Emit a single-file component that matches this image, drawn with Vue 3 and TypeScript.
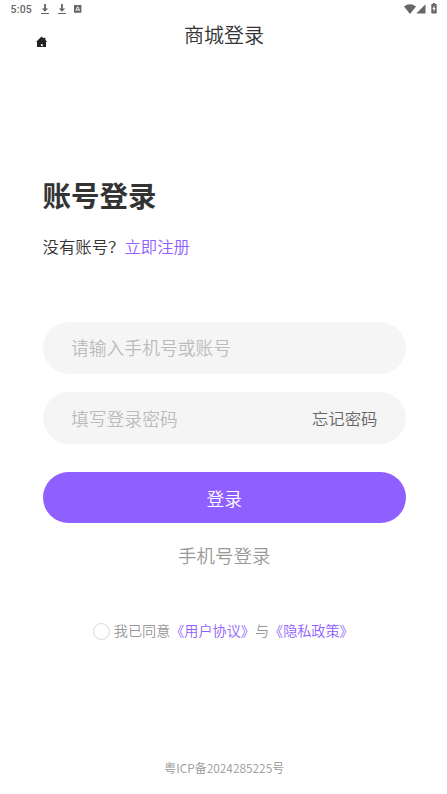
<script setup lang="ts">
import { ref } from 'vue'

const account = ref('')
const password = ref('')
const agreed = ref(false)
</script>

<template>
  <main class="page">
    <div class="status">
      <span class="time">5:05</span>
      <svg v-for="n in 2" :key="n" class="download" viewBox="0 0 10 12" aria-hidden="true">
        <path d="M4.1 1h1.8v4.5h2.3L5 8.8 1.8 5.5h2.3zM1 10h8v1H1z" />
      </svg>
      <svg class="app" viewBox="0 0 8 8" aria-hidden="true">
        <rect width="7.4" height="7.8" rx="0.6" />
        <path class="mark" d="M1.9 6 3.4 1.9h.7L5.6 6M2.6 4.8H5" />
      </svg>
      <span class="spacer"></span>
      <svg class="wifi" viewBox="0 0 12 10" aria-hidden="true">
        <path d="M0 2.5Q6-2.1 12 2.5L6 10z" />
      </svg>
      <svg class="signal" viewBox="0 0 10 10" aria-hidden="true"><path d="M9.5.3v9.2H.3z" /></svg>
      <svg class="battery" viewBox="0 0 6 11" aria-hidden="true">
        <path d="M1.8 0h2.4v1H5q.7 0 .7.7v8q0 .7-.7.7H1q-.7 0-.7-.7v-8Q.3 1 1 1h.8z" />
        <path class="bolt" d="M3.4 2.5 1.4 6h1.2v2.8l2-3.6H3.4z" />
      </svg>
    </div>

    <header class="nav">
      <button class="home" aria-label="首页">
        <svg viewBox="0 0 12 12">
          <path d="M5.5.5 7.8 2.6V1.8h1.6v2.3L11.3 6H10v5H6.6V8H5v3H1V6H0z" />
          <path d="M5 10h1.6v1H5z" />
        </svg>
      </button>
      <span class="nav-title">商城登录</span>
    </header>

    <h1>账号登录</h1>
    <p class="register">没有账号？<a>立即注册</a></p>

    <form @submit.prevent>
      <label class="field"><input v-model="account" type="text" placeholder="请输入手机号或账号" /></label>
      <div class="field">
        <input v-model="password" class="password" type="password" placeholder="填写登录密码" />
        <a class="forgot">忘记密码</a>
      </div>
      <button class="submit" type="submit">登录</button>
    </form>
    <a class="phone">手机号登录</a>

    <div class="agreement">
      <button class="radio" :class="{ on: agreed }" aria-label="同意" @click="agreed = !agreed"></button>
      <span>我已同意<a>《用户协议》</a>与<a>《隐私政策》</a></span>
    </div>

    <footer>粤ICP备2024285225号</footer>
  </main>
</template>

<style>
body {
  background: #fff;
}
</style>

<style scoped>
.page {
  box-sizing: border-box;
  display: flex;
  flex-direction: column;
  height: 794px;
  padding: 0 41px 0 42.5px;
  overflow: hidden;
  color: #333;
  font-family: "Noto Sans CJK SC", sans-serif;
  font-weight: 350;
}
button,
input {
  margin: 0;
  padding: 0;
  border: 0;
  outline: 0;
  background: none;
  font-family: inherit;
  font-weight: inherit;
}
svg {
  display: block;
}
.status {
  display: flex;
  align-items: center;
  flex: none;
  height: 18px;
  margin: 0 -31px 0 -32px;
  color: #666;
  fill: #666;
}
.time {
  width: 29.5px;
  padding-top: 1px;
  font: 500 10.5px/18px Roboto, sans-serif;
  letter-spacing: 0.2px;
}
.download {
  width: 10px;
  height: 12px;
  margin-right: 6.5px;
}
.app {
  width: 8px;
  height: 8px;
  margin-left: 0.5px;
}
.mark {
  fill: none;
  stroke: #fff;
  stroke-width: 0.9;
}
.spacer {
  flex: 1;
}
.wifi {
  width: 12px;
  height: 10px;
}
.signal {
  width: 10px;
  height: 10px;
}
.battery {
  width: 6px;
  height: 11px;
  margin: 0 0.5px 1px 5px;
}
.bolt {
  fill: #fff;
}
.nav {
  display: grid;
  grid-template-columns: 12px 1fr 12px;
  flex: none;
  height: 34px;
  margin: 0 -6px 0 -6.5px;
}
.home {
  width: 12px;
  height: 12px;
  margin-top: 18px;
}
.home svg {
  width: 12px;
  height: 12px;
  fill: #222;
}
.nav-title {
  font-size: 20px;
  line-height: 34px;
  text-align: center;
}
h1 {
  flex: none;
  margin: 122px 0 0;
  font-size: 28.5px;
  font-weight: 700;
  line-height: 42px;
}
.register {
  flex: none;
  margin: 18px 0 0;
  font-size: 16.4px;
  line-height: 24px;
}
a {
  color: #8f5fff;
}
form {
  display: flex;
  flex-direction: column;
  flex: none;
  margin-top: 63.5px;
}
.field {
  box-sizing: border-box;
  display: flex;
  align-items: center;
  height: 52.3px;
  margin-bottom: 18px;
  padding: 0 28.5px;
  border-radius: 27px;
  background: #f5f5f5;
}
.field input {
  flex: 1;
  min-width: 0;
  height: 30px;
  margin-bottom: 1px;
  color: #333;
  font-size: 17.8px;
}
.field .password {
  margin-bottom: 0;
}
.field input::placeholder {
  color: #bbb;
  opacity: 1;
}
.forgot {
  color: #666;
  font-size: 16.4px;
}
.submit {
  height: 50.5px;
  margin-top: 10.4px;
  padding-top: 1px;
  border-radius: 26px;
  background: #8f5fff;
  color: #fff;
  font-size: 17.8px;
}
.phone {
  margin-top: 17.6px;
  color: #999;
  font-size: 18.5px;
  line-height: 28px;
  text-align: center;
}
.agreement {
  display: flex;
  align-items: center;
  justify-content: center;
  gap: 4px;
  margin: 50px 2px 0 0;
  color: #999;
  font-size: 14.12px;
  line-height: 22px;
  white-space: nowrap;
}
.radio {
  box-sizing: border-box;
  width: 17px;
  height: 17px;
  margin-top: 3px;
  border: 1px solid #d8d8d8;
  border-radius: 50%;
}
.radio.on {
  background: #8f5fff;
}
footer {
  margin: auto 0 17px;
  color: #999;
  font-size: 11.95px;
  line-height: 18px;
  text-align: center;
}
</style>
